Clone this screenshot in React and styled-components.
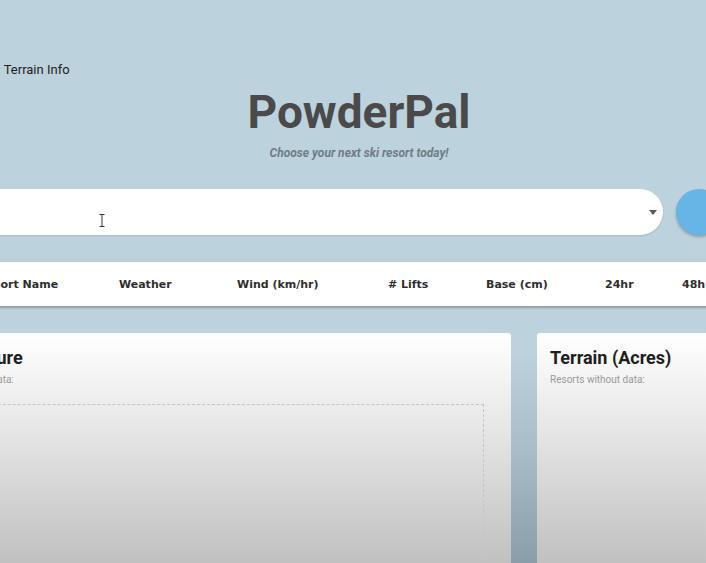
import React from 'react';
import styled, { createGlobalStyle } from 'styled-components';

const GlobalStyle = createGlobalStyle`
    html, body {
        margin: 0;
        padding: 0;
        overflow: hidden;
    }
    body {
        background: linear-gradient(180deg, #bcd2dd 0%, #bcd2dd 62%, #a9bdc8 80%, #8a9ea9 100%);
        min-height: 563px;
        font-family: 'Roboto', 'Liberation Sans', sans-serif;
    }
`;

// the page is wider than the window, shifted to the left
const Viewport = styled.div`
    width: 706px;
    height: 563px;
    overflow: hidden;
`;

const Canvas = styled.div`
    width: 958px;
    margin-left: -120px;
    display: flex;
    flex-direction: column;
`;

const Nav = styled.nav`
    display: flex;
    gap: 40px;
    padding: 61px 0 0 39px;
    height: 18px;
`;

const NavLink = styled.a`
    font-size: 13px;
    color: #222222;
    line-height: 18px;
    text-decoration: none;
`;

const Header = styled.header`
    display: flex;
    flex-direction: column;
    align-items: center;
    padding-top: 6px;
`;

const Title = styled.h1`
    margin: 0;
    font-size: 46px;
    line-height: 54px;
    font-weight: 700;
    color: #4a4a4a;
`;

const Tagline = styled.p`
    margin: 6px 0 0;
    font-size: 12px;
    line-height: 16px;
    font-style: italic;
    font-weight: 700;
    color: #6e7c86;
`;

const SearchRow = styled.div`
    display: flex;
    align-items: center;
    gap: 13px;
    padding: 28px 0 0 40px;
    width: 802px;
`;

const SearchBox = styled.div`
    position: relative;
    flex: 1;
    height: 46px;
    background: #ffffff;
    border-radius: 23px;
    box-shadow: 0 1px 2px rgba(0, 0, 0, 0.12);
`;

const Caret = styled.span`
    position: absolute;
    right: 6px;
    top: 21px;
    width: 0;
    height: 0;
    border-left: 4px solid transparent;
    border-right: 4px solid transparent;
    border-top: 5px solid #5a5a5a;
`;

const Cursor = styled.svg`
    position: absolute;
    left: 179px;
    top: 25px;
`;

const SearchButton = styled.button`
    width: 46px;
    height: 46px;
    border: none;
    border-radius: 50%;
    background: #67b4e6;
    box-shadow: 0 2px 3px rgba(0, 0, 0, 0.25);
    flex-shrink: 0;
`;

const TableHead = styled.div`
    margin-top: 27px;
    height: 44px;
    display: flex;
    align-items: center;
    background: #ffffff;
    border-bottom: 1px solid #9d9d9d;
    box-shadow: 0 1px 2px rgba(0, 0, 0, 0.25);
    padding-left: 98px;
`;

const HeadCell = styled.div`
    width: ${(p) => p.$w}px;
    flex-shrink: 0;
    font-family: 'DejaVu Sans', 'Verdana', sans-serif;
    font-size: 11px;
    font-weight: 700;
    color: #2e2e2e;
    white-space: nowrap;
`;

const Cards = styled.div`
    margin-top: 26px;
    display: grid;
    grid-template-columns: 605px 271px;
    gap: 26px;
    padding-left: 26px;
`;

const Card = styled.section`
    height: 250px;
    border-radius: 3px;
    padding: 14px 13px 0;
    background: linear-gradient(180deg, #ffffff 0%, #f3f3f3 18%, #dcdcdc 50%, #bdbdbd 92%, #b8b8b8 100%);
    display: flex;
    flex-direction: column;
`;

const CardTitle = styled.h2`
    margin: 0;
    font-size: 18px;
    line-height: 22px;
    font-weight: 700;
    color: #1e1e1e;
`;

const CardNote = styled.p`
    margin: 4px 0 0;
    font-size: 10px;
    line-height: 13px;
    color: #9a9a9a;
`;

const ChartArea = styled.div`
    margin: 18px 14px 0 14px;
    flex: 1;
    border: 1px dashed #c4c4c4;
    border-bottom: none;
`;

const columns = [
    { label: 'Resort Name', w: 141 },
    { label: 'Weather', w: 118 },
    { label: 'Wind (km/hr)', w: 151 },
    { label: '# Lifts', w: 98 },
    { label: 'Base (cm)', w: 119 },
    { label: '24hr', w: 77 },
    { label: '48hr', w: 70 },
    { label: '72hr', w: 70 },
];

const App = () => {
    return (
        <>
            <GlobalStyle />
            <Viewport>
                <Canvas>
                    <Nav>
                        <NavLink href="#">Resorts</NavLink>
                        <NavLink href="#">Terrain Info</NavLink>
                    </Nav>
                    <Header>
                        <Title>PowderPal</Title>
                        <Tagline>Choose your next ski resort today!</Tagline>
                    </Header>
                    <SearchRow>
                        <SearchBox>
                            <Cursor width="6" height="13" viewBox="0 0 6 13">
                                <path d="M0.5 0.5h5M3 0.5v12M0.5 12.5h5" stroke="#333" strokeWidth="1" fill="none" />
                            </Cursor>
                            <Caret />
                        </SearchBox>
                        <SearchButton aria-label="Search" />
                    </SearchRow>
                    <TableHead>
                        {columns.map((c) => (
                            <HeadCell key={c.label} $w={c.w}>{c.label}</HeadCell>
                        ))}
                    </TableHead>
                    <Cards>
                        <Card>
                            <CardTitle>Temperature</CardTitle>
                            <CardNote>Resorts without data:</CardNote>
                            <ChartArea />
                        </Card>
                        <Card>
                            <CardTitle>Terrain (Acres)</CardTitle>
                            <CardNote>Resorts without data:</CardNote>
                        </Card>
                    </Cards>
                </Canvas>
            </Viewport>
        </>
    );
};

export default App;
